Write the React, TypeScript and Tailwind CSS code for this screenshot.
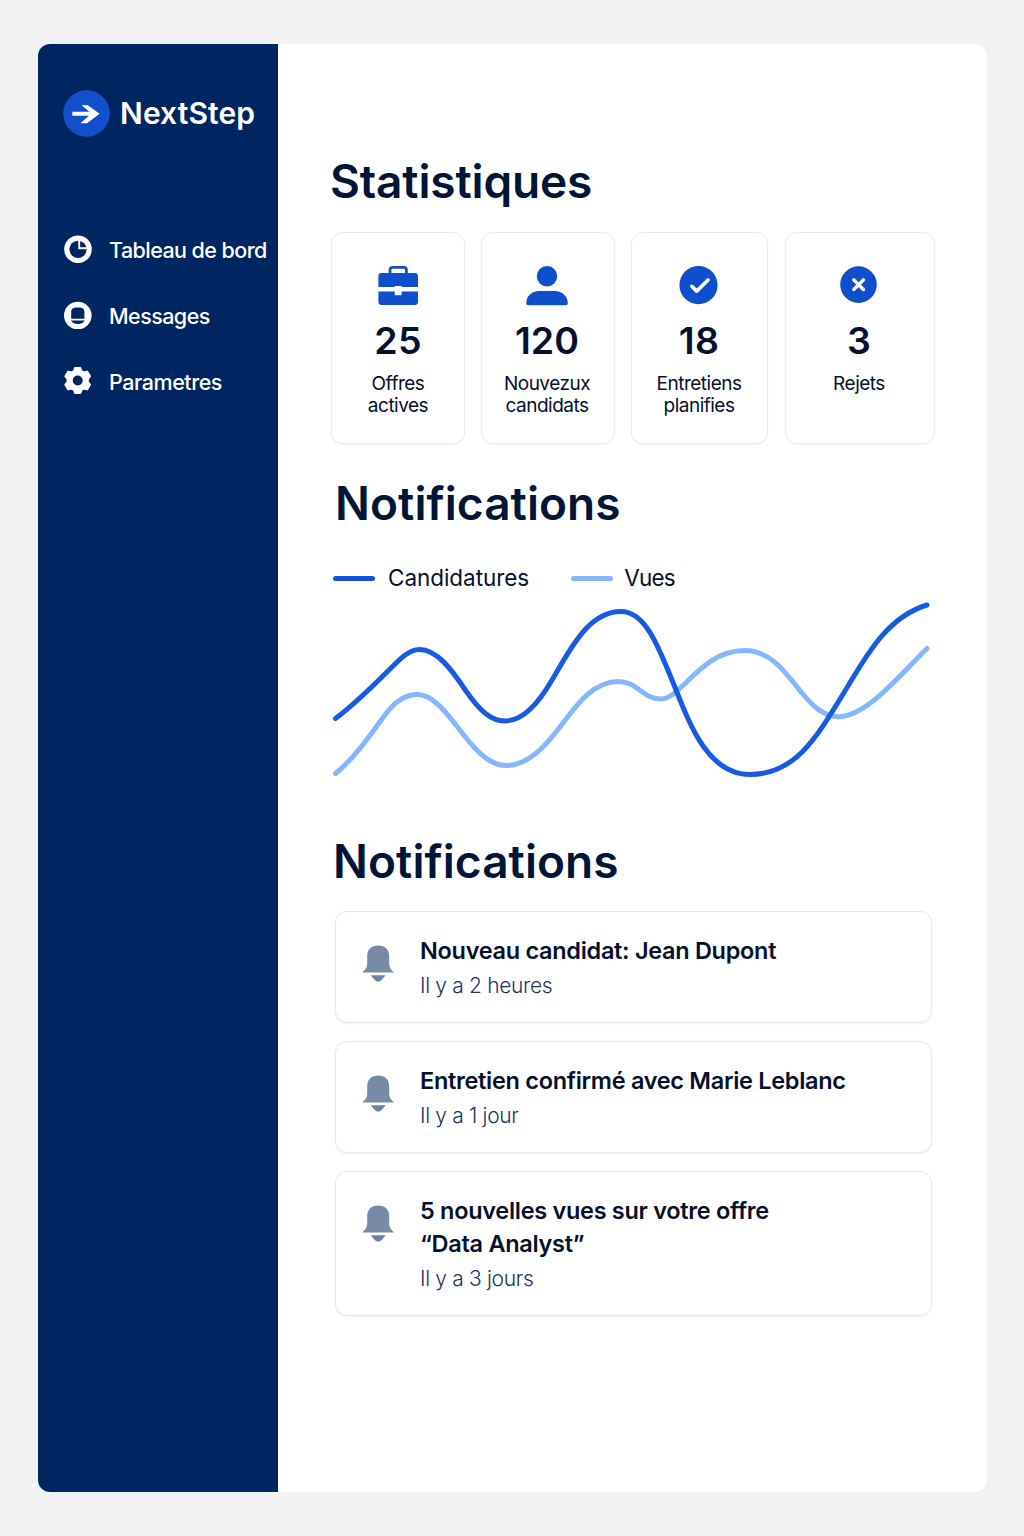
import type { ReactNode } from "react";

const NAVY = "#002661";
const BLUE = "#0f4fcb";

function LogoMark() {
  return (
    <svg className="size-[47px] shrink-0" viewBox="0 0 47 47">
      <circle cx="23.5" cy="23.5" r="22.8" fill="#1250cb" stroke="#1a5ae0" strokeWidth="0.8" />
      <path d="M9.3 21.8H26.4L18.6 15.2H24.8L36.6 23.7L24 33.2H17.4L26 25.8H9.3Z" fill="#fff" />
    </svg>
  );
}

function PieIcon() {
  return (
    <svg className="size-7" viewBox="0 0 28 28">
      <circle cx="14" cy="14.3" r="13.8" fill="#fff" />
      <circle cx="14" cy="14.3" r="8.6" fill={NAVY} />
      <path d="M15.2 5V13.2H23.5" fill="none" stroke="#fff" strokeWidth="1.9" />
    </svg>
  );
}

function MessageIcon() {
  return (
    <svg className="size-7" viewBox="0 0 28 28">
      <circle cx="13.8" cy="14.6" r="13.8" fill="#fff" />
      <path d="M7.2 17.7V10.8A4.6 4.6 0 0 1 11.4 6.4H16.2A4.6 4.6 0 0 1 20.4 10.8V17.7Z" fill={NAVY} />
      <path d="M6.8 19.5H20.8C19.2 22 16.8 22.9 13.8 22.9S8.4 22 6.8 19.5Z" fill={NAVY} />
    </svg>
  );
}

function GearIcon() {
  return (
    <svg className="size-7" viewBox="0 0 28 28">
      <path
        d="M11 1H16.4L17.4 4L19.8 5.4L23.2 4.6L26 9.3L23.9 11.8V15L26 17.7L23.2 22.4L19.8 21.6L17.4 23L16.4 26H11L10 23L7.6 21.6L4.2 22.4L1.4 17.7L3.5 15V11.8L1.4 9.3L4.2 4.6L7.6 5.4L10 4Z"
        fill="#fff"
        stroke="#fff"
        strokeWidth="2"
        strokeLinejoin="round"
      />
      <circle cx="13.7" cy="13.5" r="5" fill={NAVY} />
    </svg>
  );
}

function BriefcaseIcon() {
  return (
    <svg className="-mt-px mb-px h-10 w-[42px]" viewBox="0 0 42 40">
      <path d="M13 9V4.9A2.6 2.6 0 0 1 15.6 2.3H26.8A2.6 2.6 0 0 1 29.4 4.9V9" fill="none" stroke={BLUE} strokeWidth="2.8" />
      <path d="M1.4 22.1V11.3A3.2 3.2 0 0 1 4.6 8.1H37.8A3.2 3.2 0 0 1 41 11.3V22.1H24.6V20.9H17.8V22.1Z" fill={BLUE} />
      <path d="M1.4 26.5H17.8V30.3H24.6V26.5H41V36.8A3.2 3.2 0 0 1 37.8 40H4.6A3.2 3.2 0 0 1 1.4 36.8Z" fill={BLUE} />
    </svg>
  );
}

function PersonIcon() {
  return (
    <svg className="h-10 w-[42px]" viewBox="0 0 42 40">
      <circle cx="21" cy="10.2" r="10.2" fill={BLUE} />
      <path d="M0.2 37.3C0.2 30 6 25 13 25H29C36 25 41.8 30 41.8 37.3C41.8 38.6 41 39.2 39.8 39.2H2.2C1 39.2 0.2 38.6 0.2 37.3Z" fill={BLUE} />
    </svg>
  );
}

function CheckIcon() {
  return (
    <svg className="h-10 w-[42px]" viewBox="0 0 42 40">
      <circle cx="20.5" cy="19.1" r="19.1" fill={BLUE} />
      <path d="M13.8 20.3L18.7 25.1L30 14" fill="none" stroke="#fff" strokeWidth="3.6" strokeLinecap="round" strokeLinejoin="round" />
    </svg>
  );
}

function CrossIcon() {
  return (
    <svg className="h-10 w-[42px]" viewBox="0 0 42 40">
      <circle cx="20.5" cy="18.6" r="18.3" fill={BLUE} />
      <path d="M15.8 13.9L25.4 23.5M25.4 13.9L15.8 23.5" fill="none" stroke="#fff" strokeWidth="3.4" strokeLinecap="round" />
    </svg>
  );
}

function BellIcon() {
  return (
    <svg className="h-[37px] w-8 shrink-0" viewBox="0 0 32 37">
      <path
        d="M0.2 27.4C3.8 24.6 5.2 22 5.2 18.5V11C5.2 4.5 9.7 0.5 16.2 0.5S27.2 4.5 27.2 11V18.5C27.2 22 28.6 24.6 32 27.4Z"
        fill="#778ba6"
      />
      <path d="M8.8 30.3H23.6C21 33.3 19.4 36.6 16.2 36.6S11.4 33.3 8.8 30.3Z" fill="#6c83a1" />
    </svg>
  );
}

type NavItem = { label: string; icon: ReactNode; tracking: string };

const navItems: NavItem[] = [
  { label: "Tableau de bord", icon: <PieIcon />, tracking: "tracking-[-0.56px]" },
  { label: "Messages", icon: <MessageIcon />, tracking: "tracking-[-0.55px]" },
  { label: "Parametres", icon: <GearIcon />, tracking: "tracking-[-0.45px]" },
];

function Sidebar() {
  return (
    <aside className="w-60 shrink-0 bg-[#002661] text-white">
      <div className="flex items-center gap-[10px] pt-[46px] pl-[25px]">
        <LogoMark />
        <span className="-mt-[2px] text-[30px] leading-[46px] font-semibold tracking-[0.1px]">NextStep</span>
      </div>
      <nav className="pt-[79px]">
        {navItems.map((item) => (
          <a key={item.label} className="flex h-[66px] items-center gap-[17px] pl-[26px] whitespace-nowrap">
            {item.icon}
            <span className={`pt-px text-[21.5px] leading-7 font-medium ${item.tracking}`}>{item.label}</span>
          </a>
        ))}
      </nav>
    </aside>
  );
}

type Stat = { value: string; lines: string[]; icon: ReactNode; tracking: string };

const stats: Stat[] = [
  { value: "25", lines: ["Offres", "actives"], icon: <BriefcaseIcon />, tracking: "tracking-[0.2px]" },
  { value: "120", lines: ["Nouvezux", "candidats"], icon: <PersonIcon />, tracking: "tracking-normal" },
  { value: "18", lines: ["Entretiens", "planifies"], icon: <CheckIcon />, tracking: "tracking-[0.2px]" },
  { value: "3", lines: ["Rejets"], icon: <CrossIcon />, tracking: "tracking-normal" },
];

function StatCard({ stat }: { stat: Stat }) {
  return (
    <div className="flex flex-col items-center rounded-xl border border-[#e9eaed] bg-white pt-[33px] pr-[2px] shadow-[0_1px_2px_rgba(0,0,0,0.05)] first:pr-0 last:ml-px nth-3:pr-px">
      {stat.icon}
      <div className={`mt-[15px] text-[37.5px] leading-10 font-semibold ${stat.tracking}`}>{stat.value}</div>
      <div className="mt-3 text-center text-[19px] leading-[22px] tracking-[-0.5px]">
        {stat.lines.map((line) => (
          <div key={line}>{line}</div>
        ))}
      </div>
    </div>
  );
}

function Chart() {
  return (
    <svg className="mt-[3px] block h-[190px] w-[620px]" viewBox="320 595 620 190" fill="none" strokeWidth="5" strokeLinecap="round">
      <path
        stroke="#86b7fd"
        d="M335.5 773.5C356 757 372 732 388 711C397 700 406 694.5 417.5 694.5C434 694.5 448 715 463 734C477 752 490 765.5 506.5 765.5C528 765.5 546 746 563 723C578 703 594 681.5 618.5 681.5C638 681.5 642 699 661 699C682 699 700 650.5 745 650.5C772 650.5 787 675 802 693C812 705 823 716.7 838 716.7C866 716.7 897 678 927 648.5"
      />
      <path
        stroke="#185be3"
        d="M335.5 718.5C355 704 374 685 390 669C400 659 409 649.5 419.5 649.5C437 649.5 452 670 466 691C480 711 491 721 505 721C522 721 537 706 552 680C570 650 588 611.5 621 611.5C645 611.5 658 645 674 685C690 725 708 774.5 750 774.5C797 774.5 818 735 848 686C868 653 888 617 927 605"
      />
    </svg>
  );
}

type Notice = { title: string[]; time: string };

const notices: Notice[] = [
  { title: ["Nouveau candidat: Jean Dupont"], time: "Il y a 2 heures" },
  { title: ["Entretien confirmé avec Marie Leblanc"], time: "Il y a 1 jour" },
  { title: ["5 nouvelles vues sur votre offre", "“Data Analyst”"], time: "Il y a 3 jours" },
];

function NoticeCard({ notice }: { notice: Notice }) {
  return (
    <div className="flex gap-[26px] rounded-xl border border-[#e6e8eb] bg-white pt-[22px] pb-5 pl-[26px] shadow-[0_1px_2px_rgba(0,0,0,0.05)]">
      <div className="pt-[11px]">
        <BellIcon />
      </div>
      <div>
        <div className="text-[23.5px] leading-[33px] font-semibold tracking-[-0.3px] text-[#06102c]">
          {notice.title.map((line) => (
            <div key={line}>{line}</div>
          ))}
        </div>
        <div className="mt-[3px] text-[21px] leading-8 font-light tracking-[-0.33px] text-[#1c345c]">{notice.time}</div>
      </div>
    </div>
  );
}

export default function App() {
  return (
    <div className="h-[1536px] w-[1024px] bg-[#f2f2f4] pt-11 pl-[38px] font-['Inter',sans-serif] text-[#06102c]">
      <div className="flex h-[1448px] w-[949px] overflow-hidden rounded-xl bg-white">
        <Sidebar />
        <main className="pt-[112px] pl-[53px]">
          <h1 className="-ml-[1px] text-[46px] leading-[50px] font-semibold tracking-[-0.15px] text-[#021537]">Statistiques</h1>
          <section className="mt-[26px] grid h-[212px] grid-cols-[134px_134px_137px_151px] gap-x-4">
            {stats.map((stat) => (
              <StatCard key={stat.value} stat={stat} />
            ))}
          </section>
          <h2 className="mt-[34px] ml-1 text-[46px] leading-[50px] font-semibold tracking-[0.07px] text-[#021537]">
            Notifications
          </h2>
          <div className="mt-9 ml-[2px] flex h-7 items-center text-[22.5px] leading-7">
            <span className="h-[5px] w-[42px] rounded-full bg-[#1552de]" />
            <span className="ml-[13px] tracking-[-0.05px]">Candidatures</span>
            <span className="ml-[42px] h-[5px] w-[42px] rounded-full bg-[#86b7fd]" />
            <span className="ml-[11px] tracking-[-0.8px]">Vues</span>
          </div>
          <div className="-ml-[11px]">
            <Chart />
          </div>
          <h2 className="mt-[51px] ml-[2px] text-[46px] leading-[50px] font-semibold tracking-[0.07px] text-[#021537]">
            Notifications
          </h2>
          <section className="mt-[25px] ml-1 flex w-[597px] flex-col gap-[18px]">
            {notices.map((notice) => (
              <NoticeCard key={notice.time} notice={notice} />
            ))}
          </section>
        </main>
      </div>
    </div>
  );
}
